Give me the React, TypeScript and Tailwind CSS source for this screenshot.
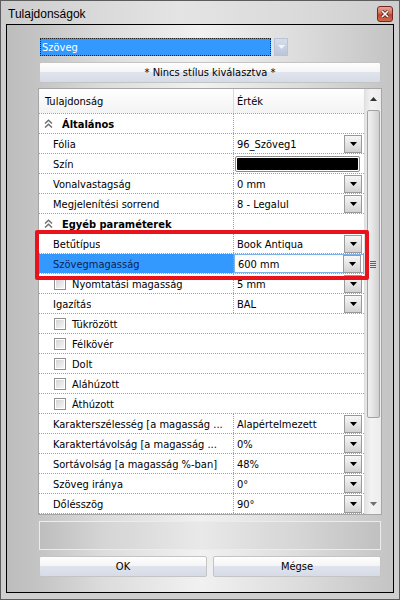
import React from "react";

// ─── Tulajdonságok ablak ─────────────────────────────────────────────────────

type Row =
  | { kind: "group"; label: string }
  | { kind: "check"; label: string }
  | {
      kind: "prop";
      label: string;
      value?: string;
      color?: boolean;
      checkbox?: boolean;
      selected?: boolean;
    };

const rows: Row[] = [
  { kind: "group", label: "Általános" },
  { kind: "prop", label: "Fólia", value: "96_Szöveg1" },
  { kind: "prop", label: "Szín", color: true },
  { kind: "prop", label: "Vonalvastagság", value: "0 mm" },
  { kind: "prop", label: "Megjelenítési sorrend", value: "8 - Legalul" },
  { kind: "group", label: "Egyéb paraméterek" },
  { kind: "prop", label: "Betűtípus", value: "Book Antiqua" },
  { kind: "prop", label: "Szövegmagasság", value: "600 mm", selected: true },
  { kind: "prop", label: "Nyomtatási magasság", value: "5 mm", checkbox: true },
  { kind: "prop", label: "Igazítás", value: "BAL" },
  { kind: "check", label: "Tükrözött" },
  { kind: "check", label: "Félkövér" },
  { kind: "check", label: "Dolt" },
  { kind: "check", label: "Aláhúzott" },
  { kind: "check", label: "Áthúzott" },
  { kind: "prop", label: "Karakterszélesség [a magasság ...", value: "Alapértelmezett" },
  { kind: "prop", label: "Karaktertávolság [a magasság ...", value: "0%" },
  { kind: "prop", label: "Sortávolság [a magasság %-ban]", value: "48%" },
  { kind: "prop", label: "Szöveg iránya", value: "0°" },
  { kind: "prop", label: "Dőlésszög", value: "90°" },
];

function DownTriangle({ color = "#000" }: { color?: string }) {
  return (
    <svg width="7" height="4" viewBox="0 0 7 4">
      <polygon points="0,0 7,0 3.5,4" fill={color} />
    </svg>
  );
}

function UpTriangle({ color = "#333" }: { color?: string }) {
  return (
    <svg width="7" height="4" viewBox="0 0 7 4">
      <polygon points="0,4 7,4 3.5,0" fill={color} />
    </svg>
  );
}

function DropButton() {
  return (
    <div className="w-[18px] h-[18px] shrink-0 border border-[#9a9a9a] bg-[linear-gradient(to_bottom,#f7f7f7,#e4e4e4_50%,#d2d2d2)] flex items-center justify-center pt-[1px]">
      <DownTriangle />
    </div>
  );
}

function Checkbox() {
  return (
    <div className="w-[12px] h-[12px] shrink-0 border border-[#8f8f8f] bg-white p-[1px]">
      <div className="w-full h-full bg-[linear-gradient(135deg,#d4d4d4,#f6f6f6)]" />
    </div>
  );
}

function Chevrons() {
  return (
    <svg width="9" height="9" viewBox="0 0 9 9" className="shrink-0">
      <polyline points="1,4.5 4.5,1.2 8,4.5" fill="none" stroke="#707070" strokeWidth="1.5" />
      <polyline points="1,8.5 4.5,5.2 8,8.5" fill="none" stroke="#707070" strokeWidth="1.5" />
    </svg>
  );
}

function GridRow({ row }: { row: Row }) {
  if (row.kind === "check") {
    return (
      <div className="h-[20px] flex items-center pl-[15px] gap-[6px] border-b border-dotted border-[#a0a0a0]">
        <Checkbox />
        <span className="pt-[4px]">{row.label}</span>
      </div>
    );
  }

  if (row.kind === "group") {
    return (
      <div className="h-[20px] flex border-b border-dotted border-[#a0a0a0]">
        <div className="w-[195px] shrink-0 flex items-center pl-[5px] gap-[9px] border-r border-dotted border-[#a0a0a0]">
          <Chevrons />
          <span className="pt-[3px] font-bold">{row.label}</span>
        </div>
        <div className="flex-1" />
      </div>
    );
  }

  return (
    <div className="h-[20px] flex border-b border-dotted border-[#a0a0a0]">
      <div
        className={
          row.selected
            ? "w-[195px] shrink-0 flex items-center gap-[6px] pl-[14px] bg-[#3399ff] text-[#0c2452] border-r border-dotted border-[#a0a0a0]"
            : row.checkbox
              ? "w-[195px] shrink-0 flex items-center gap-[6px] pl-[15px] border-r border-dotted border-[#a0a0a0]"
              : "w-[195px] shrink-0 flex items-center gap-[6px] pl-[14px] border-r border-dotted border-[#a0a0a0]"
        }
      >
        {row.checkbox && <Checkbox />}
        <span className="pt-[4px] whitespace-nowrap overflow-hidden">{row.label}</span>
      </div>
      <div
        className={
          row.selected
            ? "flex-1 flex items-center pl-[3px] pr-[2px] bg-white border border-[#7fb2e8]"
            : "flex-1 flex items-center pl-[3px] pr-[2px]"
        }
      >
        {row.color ? (
          <div className="w-[125px] h-[16px] -ml-[2px] rounded-[2px] border border-[#8a8a8a] bg-white p-[1px]">
            <div className="w-full h-full bg-black rounded-[1px]" />
          </div>
        ) : (
          <>
            <span className="flex-1 pt-[4px] whitespace-nowrap">{row.value}</span>
            <DropButton />
          </>
        )}
      </div>
    </div>
  );
}

function Scrollbar() {
  return (
    <div className="w-[17px] shrink-0 flex flex-col items-center bg-[linear-gradient(to_right,#e3e3e3,#f3f3f3_40%,#ececec)] border-l border-[#dedede]">
      <div className="h-[17px] flex items-center justify-center pt-[2px]">
        <UpTriangle />
      </div>
      <div className="mt-[4px] w-[13px] h-[308px] rounded-[2px] border border-[#a3a3a3] bg-[linear-gradient(to_right,#f2f2f2,#e2e2e2_50%,#cfcfcf)] flex items-center justify-center">
        <div className="flex flex-col gap-[1px]">
          <div className="w-[6px] h-px bg-[#606060]" />
          <div className="w-[6px] h-px bg-[#606060]" />
          <div className="w-[6px] h-px bg-[#606060]" />
          <div className="w-[6px] h-px bg-[#606060]" />
        </div>
      </div>
      <div className="flex-1" />
      <div className="h-[17px] flex items-center justify-center pb-[3px]">
        <DownTriangle color="#707070" />
      </div>
    </div>
  );
}

function WinButton({ children, className = "" }: { children: React.ReactNode; className?: string }) {
  return (
    <div
      className={`h-[21px] flex items-center justify-center rounded-[2px] border border-[#c4c4c4] bg-[linear-gradient(to_bottom,#fefefe_0%,#f4f4f4_48%,#dfe3ec_50%,#d6dbe7_100%)] ${className}`}
    >
      <span className="pt-[2px]">{children}</span>
    </div>
  );
}

export default function App() {
  return (
    <div className="relative w-[400px] h-[600px] flex flex-col border border-[#5c5c5c] bg-[#cfcfcf] text-[11px] text-black font-['DejaVu_Sans_Condensed','DejaVu_Sans',sans-serif]">
      {/* Címsor */}
      <div className="h-[23px] flex justify-between pl-[7px] pr-[6px] bg-[linear-gradient(to_right,#cdcdcd,#e4e4e4_45%,#dadada_75%,#cdcdcd)]">
        <span className="pt-[4px] text-[12px] font-['Liberation_Sans',Arial,sans-serif]">Tulajdonságok</span>
        <div className="mt-[5px] w-[16px] h-[16px] rounded-[3px] border border-[#6e2a22] bg-[linear-gradient(to_bottom,#e8a593,#d2705d_45%,#c0432e_55%,#d16a4e)] flex items-center justify-center">
          <svg width="8" height="8" viewBox="0 0 8 8">
            <path d="M1 1 L7 7 M7 1 L1 7" stroke="#4a1a14" strokeWidth="3" />
            <path d="M1 1 L7 7 M7 1 L1 7" stroke="#ffffff" strokeWidth="1.7" />
          </svg>
        </div>
      </div>

      {/* Munkaterület */}
      <div className="mx-[5px] mb-[6px] flex-1 border border-black flex flex-col pl-[31px] pr-[11px] pt-[13px] bg-[linear-gradient(to_right,#bdbdbd_0%,#c4c4c4_8%,#dcdcdc_25%,#f1f1f1_50%,#dddddd_75%,#c4c4c4_100%)]">
        {/* Típus választó */}
        <div className="ml-[2px] w-[248px] h-[18px] flex gap-[3px]">
          <div className="flex-1 bg-[#3399ff] border border-dotted border-[#202020] text-white flex items-center pl-[1px]">
            <span className="pt-[2px]">Szöveg</span>
          </div>
          <div className="w-[14px] border border-[#b9c3d8] bg-[linear-gradient(to_bottom,#d6dcea,#bcc6da)] flex items-center justify-center">
            <DownTriangle color="#f2f4f8" />
          </div>
        </div>

        <WinButton className="mt-[6px] mx-[1px]">* Nincs stílus kiválasztva *</WinButton>

        {/* Tulajdonság rács */}
        <div className="mt-[5px] h-[427px] flex border border-[#a6a6a6] bg-white">
          <div className="flex-1 flex flex-col">
            <div className="h-[25px] flex border-b border-dotted border-[#a0a0a0] bg-[linear-gradient(to_bottom,#ffffff,#f3f3f3)]">
              <div className="w-[195px] shrink-0 pl-[6px] flex items-center border-r border-[#dadada]">
                <span className="pt-[3px]">Tulajdonság</span>
              </div>
              <div className="flex-1 pl-[3px] flex items-center">
                <span className="pt-[3px]">Érték</span>
              </div>
            </div>
            {rows.map((row) => (
              <GridRow key={row.label} row={row} />
            ))}
          </div>
          <Scrollbar />
        </div>

        {/* Leírás */}
        <div className="mt-[6px] mx-[1px] h-[29px] border border-[#ececec] bg-[#000000]/[0.03]" />

        <div className="mt-[6px] mx-[1px] flex gap-[6px]">
          <WinButton className="flex-1">OK</WinButton>
          <WinButton className="flex-1">Mégse</WinButton>
        </div>
      </div>

      {/* Kiemelés */}
      <div className="absolute left-[34px] top-[229px] w-[334px] h-[50px] border-[4px] border-[#e8131b] rounded-[2px] pointer-events-none" />
    </div>
  );
}
